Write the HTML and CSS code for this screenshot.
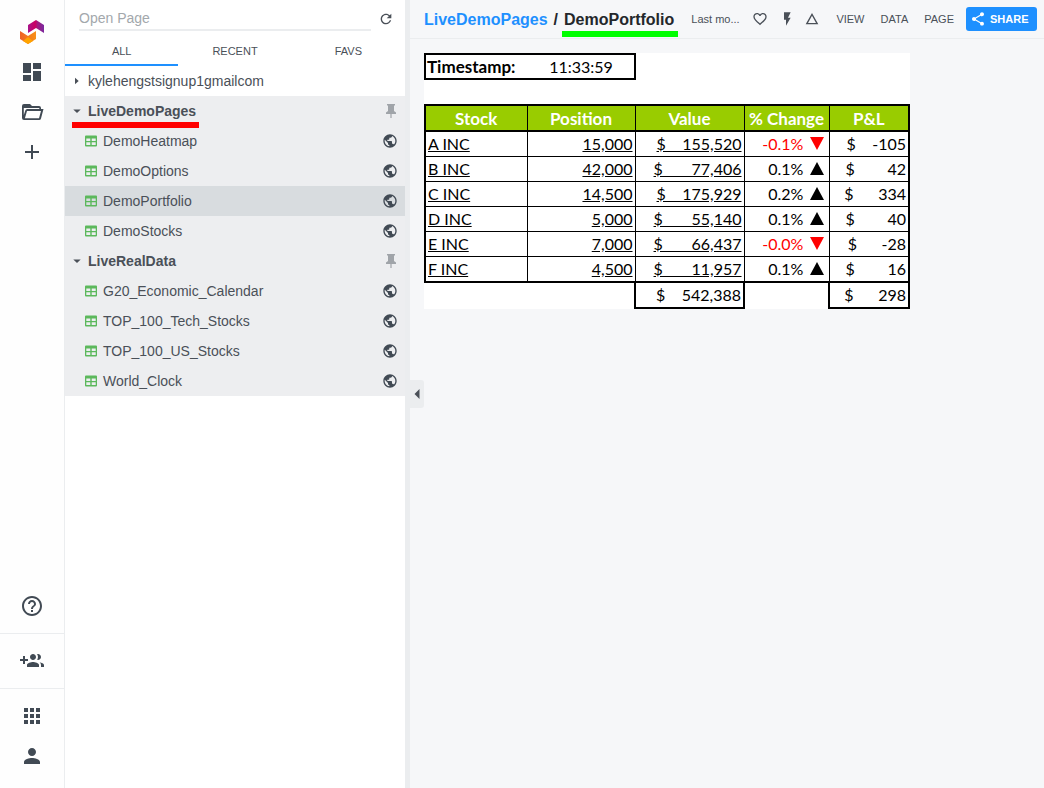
FILE: index.html
```
<!DOCTYPE html>
<html lang="en">
<head>
<meta charset="utf-8">
<title>LiveDemoPages / DemoPortfolio</title>
<link rel="stylesheet" href="styles.css">
</head>
<body>
<svg class="sprite" aria-hidden="true">
  <linearGradient id="berry" x1="0" x2="1"><stop offset="0" stop-color="#a8148c"/><stop offset=".45" stop-color="#cc0062"/><stop offset=".6" stop-color="#a01a80"/><stop offset="1" stop-color="#7a2aa0"/></linearGradient>
  <linearGradient id="amber" x1="0" x2="1"><stop offset="0" stop-color="#ee6026"/><stop offset="1" stop-color="#f89018"/></linearGradient>
  <symbol id="globe" viewBox="0 0 24 24"><path d="M12 2C6.48 2 2 6.48 2 12s4.48 10 10 10 10-4.48 10-10S17.52 2 12 2zm-1 17.93c-3.95-.49-7-3.85-7-7.93 0-.62.08-1.21.21-1.79L9 15v1c0 1.1.9 2 2 2v1.93zm6.9-2.54c-.26-.81-1-1.39-1.9-1.39h-1v-3c0-.55-.45-1-1-1H8v-2h2c.55 0 1-.45 1-1V7h2c1.1 0 2-.9 2-2v-.41c2.93 1.19 5 4.06 5 7.41 0 2.08-.8 3.97-2.1 5.39z"/></symbol>
  <symbol id="sheet" viewBox="0 0 12 12"><path fill-rule="evenodd" d="M1 .5h10a1 1 0 0 1 1 1v9a1 1 0 0 1-1 1H1a1 1 0 0 1-1-1v-9a1 1 0 0 1 1-1zM1.300 3.500v2.500h4v-2.500zm5.400 0v2.500h4v-2.500zM1.300 7.200v2.800h4V7.200zm5.400 0v2.800h4V7.200z"/></symbol>
  <symbol id="pin" viewBox="0 0 10 14"><path d="M1 0h8v1.500H8v5.500l2 1.500V10H5.600v4H4.400v-4H0V8.500L2 7V1.500H1z"/></symbol>
  <symbol id="closed" viewBox="0 0 8 8"><path d="M2 .7 5.700 4 2 7.300z"/></symbol>
  <symbol id="opened" viewBox="0 0 8 8"><path d="M.3 2.500h7.400L4 6z"/></symbol>
</svg>
<div class="app">
  <nav class="rail" aria-label="Main">
    <div class="rail-group rail-top">
      <a class="rail-item" href="#" aria-label="Home">
        <svg viewBox="0 0 24 24"><path fill="url(#berry)" d="M8 5l8-5 8 5v8l-8-5-8 5z"/><path fill="url(#amber)" d="M0 11l8 5 8-5v8l-8 5-8-5z"/><path fill="#ffa400" d="M8 17l5 4-5 3-5-3z"/></svg>
      </a>
      <button class="rail-item" aria-label="Dashboard"><svg viewBox="0 0 24 24"><path d="M3 13h8V3H3v10zm0 8h8v-6H3v6zm10 0h8V11h-8v10zm0-18v6h8V3h-8z"/></svg></button>
      <button class="rail-item" aria-label="Folders"><svg viewBox="0 0 24 24"><path fill-rule="evenodd" d="M2 6a2 2 0 0 1 2-2h6l2 2h7a2 2 0 0 1 2 2v1h2.500L21 18.500A2 2 0 0 1 19 20H4a2 2 0 0 1-2-2zM3.800 8v7L5.300 10.500A2 2 0 0 1 7.200 9H19.300V8zM7 11 4.900 18.200H19L21 11z"/></svg></button>
      <button class="rail-item" aria-label="New"><svg viewBox="0 0 24 24"><path d="M19 13h-6v6h-2v-6H5v-2h6V5h2v6h6v2z"/></svg></button>
    </div>
    <div class="rail-group rail-help">
      <button class="rail-item" aria-label="Help"><svg viewBox="0 0 24 24"><path d="M11 18h2v-2h-2v2zm1-16C6.480 2 2 6.480 2 12s4.480 10 10 10 10-4.480 10-10S17.520 2 12 2zm0 18c-4.410 0-8-3.590-8-8s3.590-8 8-8 8 3.590 8 8-3.590 8-8 8zm0-14c-2.210 0-4 1.790-4 4h2c0-1.100.9-2 2-2s2 .9 2 2c0 2-3 1.750-3 5h2c0-2.250 3-2.500 3-5 0-2.210-1.790-4-4-4z"/></svg></button>
    </div>
    <div class="rail-group">
      <button class="rail-item" aria-label="Invite people"><svg viewBox="0 0 24 24"><path d="M8 10H5V7H3v3H0v2h3v3h2v-3h3v-2zm10 1c1.660 0 2.990-1.340 2.990-3S19.660 5 18 5c-.32 0-.63.05-.91.14.57.81.9 1.790.9 2.860s-.34 2.040-.9 2.860c.28.09.59.14.91.14zm-5 0c1.660 0 2.990-1.340 2.990-3S14.660 5 13 5c-1.660 0-3 1.340-3 3s1.340 3 3 3zm6.620 2.160c.83.73 1.380 1.660 1.380 2.840v2h3v-2c0-1.540-2.370-2.490-4.380-2.840zM13 13c-2 0-6 1-6 3v2h12v-2c0-2-4-3-6-3z"/></svg></button>
    </div>
    <div class="rail-group rail-last">
      <button class="rail-item" aria-label="Apps"><svg viewBox="0 0 24 24"><path d="M4 8h4V4H4v4zm6 12h4v-4h-4v4zm-6 0h4v-4H4v4zm0-6h4v-4H4v4zm6 0h4v-4h-4v4zm6-10v4h4V4h-4zm-6 4h4V4h-4v4zm6 6h4v-4h-4v4zm0 6h4v-4h-4v4z"/></svg></button>
      <button class="rail-item" aria-label="Account"><svg viewBox="0 0 24 24"><path d="M12 12c2.210 0 4-1.790 4-4s-1.790-4-4-4-4 1.790-4 4 1.790 4 4 4zm0 2c-2.670 0-8 1.340-8 4v2h16v-2c0-2.660-5.330-4-8-4z"/></svg></button>
    </div>
  </nav>

  <aside class="pages">
    <div class="search">
      <input class="search-box" type="text" placeholder="Open Page" aria-label="Open Page">
      <button class="refresh" aria-label="Refresh"><svg viewBox="0 0 24 24"><path d="M17.650 6.350C16.200 4.900 14.210 4 12 4c-4.420 0-7.990 3.580-7.990 8s3.570 8 7.990 8c3.730 0 6.840-2.550 7.730-6h-2.080c-.82 2.330-3.040 4-5.650 4-3.310 0-6-2.690-6-6s2.690-6 6-6c1.660 0 3.140.69 4.220 1.780L13 11h7V4l-2.350 2.350z"/></svg></button>
    </div>
    <div class="tabs">
      <button class="tab tab-on">ALL</button>
      <button class="tab">RECENT</button>
      <button class="tab">FAVS</button>
    </div>
    <div class="tree">
      <button class="folder"><svg class="caret"><use href="#closed"/></svg><span class="label">kylehengstsignup1gmailcom</span></button>
      <div class="open-folder">
        <button class="folder folder-on marked"><svg class="caret"><use href="#opened"/></svg><span class="label">LiveDemoPages</span><svg class="pin"><use href="#pin"/></svg></button>
        <a class="page" href="#"><svg class="sheet-icon"><use href="#sheet"/></svg><span class="label">DemoHeatmap</span><svg class="globe"><use href="#globe"/></svg></a>
        <a class="page" href="#"><svg class="sheet-icon"><use href="#sheet"/></svg><span class="label">DemoOptions</span><svg class="globe"><use href="#globe"/></svg></a>
        <a class="page page-on" href="#"><svg class="sheet-icon"><use href="#sheet"/></svg><span class="label">DemoPortfolio</span><svg class="globe"><use href="#globe"/></svg></a>
        <a class="page" href="#"><svg class="sheet-icon"><use href="#sheet"/></svg><span class="label">DemoStocks</span><svg class="globe"><use href="#globe"/></svg></a>
      </div>
      <div class="open-folder">
        <button class="folder folder-on"><svg class="caret"><use href="#opened"/></svg><span class="label">LiveRealData</span><svg class="pin"><use href="#pin"/></svg></button>
        <a class="page" href="#"><svg class="sheet-icon"><use href="#sheet"/></svg><span class="label">G20_Economic_Calendar</span><svg class="globe"><use href="#globe"/></svg></a>
        <a class="page" href="#"><svg class="sheet-icon"><use href="#sheet"/></svg><span class="label">TOP_100_Tech_Stocks</span><svg class="globe"><use href="#globe"/></svg></a>
        <a class="page" href="#"><svg class="sheet-icon"><use href="#sheet"/></svg><span class="label">TOP_100_US_Stocks</span><svg class="globe"><use href="#globe"/></svg></a>
        <a class="page" href="#"><svg class="sheet-icon"><use href="#sheet"/></svg><span class="label">World_Clock</span><svg class="globe"><use href="#globe"/></svg></a>
      </div>
    </div>
  </aside>

  <main class="main">
    <button class="collapse" aria-label="Collapse"><svg viewBox="0 0 6 10"><path d="M5.500 0v10L.5 5z"/></svg></button>
    <header class="topbar">
      <h1 class="title"><a class="crumb" href="#">LiveDemoPages</a><span>/</span><span class="current">DemoPortfolio</span></h1>
      <span class="modified">Last mo...</span>
      <div class="tools">
        <button class="tool" aria-label="Favourite"><svg viewBox="0 0 24 24"><path d="M16.500 3c-1.740 0-3.410.81-4.500 2.090C10.910 3.810 9.240 3 7.500 3 4.420 3 2 5.420 2 8.500c0 3.780 3.400 6.860 8.550 11.540L12 21.350l1.450-1.320C18.600 15.360 22 12.280 22 8.500 22 5.420 19.580 3 16.500 3zm-4.400 15.550l-.1.100-.1-.1C7.140 14.240 4 11.390 4 8.500 4 6.500 5.500 5 7.500 5c1.540 0 3.040.99 3.570 2.360h1.870C13.460 5.990 14.960 5 16.500 5c2 0 3.500 1.500 3.500 3.500 0 2.890-3.140 5.740-7.900 10.050z"/></svg></button>
        <button class="tool" aria-label="Automation"><svg viewBox="0 0 24 24"><path d="M9 2v11h3v9l7-12h-4l4-8z"/></svg></button>
        <button class="tool" aria-label="Alerts"><svg viewBox="0 0 24 24"><path fill-rule="evenodd" d="M12 3l9.500 17h-19zM12 7.200L6 18h12z"/></svg></button>
      </div>
      <div class="menus">
        <button class="menu">VIEW</button>
        <button class="menu">DATA</button>
        <button class="menu">PAGE</button>
      </div>
      <button class="share"><svg viewBox="0 0 24 24"><path d="M18 16.080c-.76 0-1.440.3-1.960.77L8.910 12.700c.05-.23.09-.46.09-.7s-.04-.47-.09-.7l7.050-4.110c.54.5 1.250.81 2.040.81 1.660 0 3-1.340 3-3s-1.340-3-3-3-3 1.340-3 3c0 .24.04.47.09.7L8.040 9.810C7.500 9.310 6.790 9 6 9c-1.660 0-3 1.340-3 3s1.340 3 3 3c.79 0 1.500-.31 2.040-.81l7.120 4.160c-.05.21-.08.43-.08.65 0 1.610 1.310 2.920 2.920 2.920s2.920-1.310 2.920-2.920-1.310-2.920-2.920-2.920z"/></svg>SHARE</button>
    </header>
    <div class="content">
      <section class="workbook">
        <div class="stamp"><strong class="stamp-name">Timestamp:</strong><time class="stamp-time">11:33:59</time></div>
        <table class="grid">
          <colgroup><col class="c-stock"><col class="c-position"><col class="c-value"><col class="c-change"><col class="c-pl"></colgroup>
          <thead>
            <tr><th>Stock</th><th>Position</th><th>Value</th><th>% Change</th><th>P&amp;L</th></tr>
          </thead>
          <tbody>
            <tr><td class="link">A INC</td><td class="link num">15,000</td><td class="link num">$    155,520</td><td class="num down">-0.1% <i class="arrow"></i></td><td class="num">$    -105</td></tr>
            <tr><td class="link">B INC</td><td class="link num">42,000</td><td class="link num">$       77,406</td><td class="num up">0.1% <i class="arrow"></i></td><td class="num">$        42</td></tr>
            <tr><td class="link">C INC</td><td class="link num">14,500</td><td class="link num">$    175,929</td><td class="num up">0.2% <i class="arrow"></i></td><td class="num">$      334</td></tr>
            <tr><td class="link">D INC</td><td class="link num">5,000</td><td class="link num">$       55,140</td><td class="num up">0.1% <i class="arrow"></i></td><td class="num">$        40</td></tr>
            <tr><td class="link">E INC</td><td class="link num">7,000</td><td class="link num">$       66,437</td><td class="num down">-0.0% <i class="arrow"></i></td><td class="num">$      -28</td></tr>
            <tr><td class="link">F INC</td><td class="link num">4,500</td><td class="link num">$       11,957</td><td class="num up">0.1% <i class="arrow"></i></td><td class="num">$        16</td></tr>
          </tbody>
          <tfoot>
            <tr><td></td><td></td><td class="num total">$    542,388</td><td></td><td class="num total">$      298</td></tr>
          </tfoot>
        </table>
      </section>
    </div>
  </main>
</div>
</body>
</html>
```
FILE: styles.css
```
* { box-sizing: border-box; }
body {
  margin: 0;
  font-family: "Liberation Sans", Arial, sans-serif;
  font-size: 14px;
  color: #4a5058;
  background: #f6f7f9;
}
button {
  margin: 0;
  padding: 0;
  border: 0;
  background: none;
  color: inherit;
  font: inherit;
}
a { color: inherit; text-decoration: none; }
svg { display: block; fill: currentColor; flex: none; }
.sprite { position: absolute; width: 0; height: 0; }
.app { display: flex; min-height: 100vh; }

/* icon rail */
.rail {
  display: flex;
  flex-direction: column;
  flex: none;
  width: 65px;
  background: #fefefe;
  border-right: 1px solid #ebedef;
  color: #414a54;
}
.rail-group { padding: 7px 0; border-bottom: 1px solid #ebedef; }
.rail-top { padding: 12px 0 0; border-bottom: 0; }
.rail-help { margin-top: auto; }
.rail-last { padding-bottom: 12px; border-bottom: 0; }
.rail-item {
  display: flex;
  align-items: center;
  justify-content: center;
  width: 100%;
  height: 40px;
}
.rail-item svg { width: 24px; height: 24px; }

/* page tree */
.pages {
  flex: none;
  width: 345px;
  background: #fff;
  border-right: 5px solid #ebedef;
}
.search { display: flex; align-items: center; height: 37px; padding: 0 11px 0 14px; gap: 7px; }
.search-box {
  flex: 1;
  min-width: 0;
  height: 24px;
  padding: 0;
  border: 0;
  border-bottom: 2px solid #ebedef;
  background: none;
  font: inherit;
  color: inherit;
  outline: 0;
}
.search-box::placeholder { color: #a3a8ac; opacity: 1; }
.refresh svg { width: 16px; height: 16px; }
.tabs { display: flex; }
.tab { flex: 1; height: 29px; border-bottom: 2px solid transparent; font-size: 11px; }
.tab-on { border-bottom-color: #1e90ff; }
.folder, .page {
  display: flex;
  align-items: center;
  width: 100%;
  height: 30px;
  padding: 0 7px 0 8px;
  text-align: left;
}
.page { padding-left: 20px; gap: 6px; }
.folder { gap: 7px; }
.label { flex: 1; }
.open-folder { background: #edeef0; }
.folder-on { font-weight: bold; }
.page-on { background: #d8dcdf; }
.caret { width: 8px; height: 8px; }
.sheet-icon { width: 12px; height: 12px; color: #5cb85c; }
.globe { width: 16px; height: 16px; color: #414a54; }
.pin { width: 10px; height: 14px; margin-right: 2px; color: #a0a4a9; }
.marked { position: relative; }
.marked::after {
  content: "";
  position: absolute;
  left: 7px;
  bottom: -2px;
  width: 127px;
  height: 6px;
  background: #f00;
}

/* main area */
.main { position: relative; flex: 1; min-width: 0; }
.collapse {
  position: absolute;
  left: 0;
  top: 380px;
  display: flex;
  align-items: center;
  justify-content: center;
  width: 14px;
  height: 28px;
  border-radius: 0 3px 3px 0;
  background: #ebedef;
}
.collapse svg { width: 6px; height: 10px; }
.topbar {
  display: flex;
  align-items: center;
  height: 39px;
  padding: 0 7px 0 14px;
  border-bottom: 1px solid #ebedef;
}
.title {
  display: flex;
  flex: none;
  gap: 6px;
  margin: 0;
  padding-top: 1px;
  font-size: 16px;
  line-height: 20px;
  color: #24272b;
  white-space: nowrap;
}
.crumb { color: #1e90ff; }
.current { position: relative; }
.current::after {
  content: "";
  position: absolute;
  left: -2px;
  right: -4px;
  top: 21px;
  height: 6px;
  background: #0f0;
}
.modified {
  flex: 1;
  margin-left: 17px;
  white-space: nowrap;
  font-size: 11px;
}
.tools { display: flex; flex: none; gap: 10px; margin: 0 16px 0 11px; }
.tool svg { width: 16px; height: 16px; }
.menus { display: flex; flex: none; gap: 16px; margin-right: 12px; font-size: 11px; }
.share {
  display: flex;
  align-items: center;
  flex: none;
  gap: 4px;
  width: 71px;
  height: 24px;
  padding-left: 4px;
  border-radius: 3px;
  background: #1e90ff;
  color: #fff;
  font-size: 11px;
  font-weight: bold;
}
.share svg { width: 16px; height: 16px; }

/* spreadsheet */
.content { padding: 14px; }
.workbook {
  width: 486px;
  background: #fff;
  color: #000;
  font-family: Lato, "Open Sans", sans-serif;
  font-size: 16px;
  line-height: 20px;
}
.stamp {
  display: flex;
  align-items: center;
  width: 212px;
  height: 27px;
  margin-bottom: 24px;
  border: 2px solid #000;
}
.stamp-name { width: 102px; padding-left: 1px; font-size: 17px; font-weight: bold; }
.stamp-time { flex: 1; text-align: center; }
.grid { width: 100%; table-layout: fixed; border-collapse: collapse; }
.c-stock { width: 102px; }
.c-position { width: 108px; }
.c-value { width: 109px; }
.c-change { width: 85px; }
.c-pl { width: 80px; }
.grid th, .grid td { height: 25px; padding: 1px 2px; white-space: pre; }
.grid th { height: 26px; padding-top: 2px; background: #9c0; color: #fff; font-size: 17px; }
.grid thead th, .grid tbody td { border: 1px solid #000; }
.grid thead th { border-top: 2px solid #000; border-bottom: 2px solid #000; }
.grid tr > :first-child { border-left: 2px solid #000; }
.grid tr > :last-child { border-right: 2px solid #000; }
.grid tbody tr:last-child td { height: 26px; border-bottom: 2px solid #000; }
.grid tfoot td { height: 26px; }
.grid tfoot td:first-child { border-left: 0; }
.grid .total { border: 2px solid #000; }
.link { text-decoration: underline; }
.num { text-align: right; }
.down { color: #f00; }
.grid .up, .grid .down { padding-right: 5px; }
.arrow {
  display: inline-block;
  margin-left: 2px;
  border-left: 7px solid transparent;
  border-right: 7px solid transparent;
}
.up .arrow { border-bottom: 13px solid #000; }
.down .arrow { border-top: 13px solid #f00; }
```
